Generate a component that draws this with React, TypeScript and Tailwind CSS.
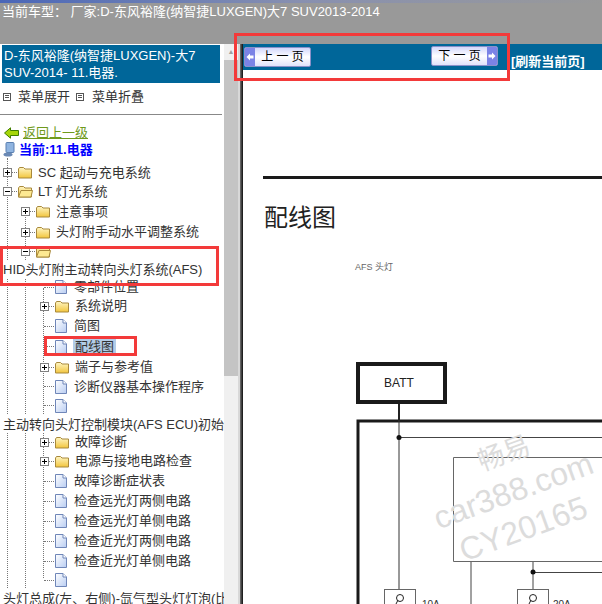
// App.tsx - repair manual viewer: tree on the left, wiring diagram page on the right
const FONT = { fontFamily: '"Liberation Sans", "Noto Sans CJK SC", sans-serif' };

type Row = { h: number; level?: 0 | 1 | 2; icon?: "closed" | "open" | "doc"; exp?: "+" | "-"; text?: string; sel?: boolean };

const rows: Row[] = [
  { h: 19, level: 0, icon: "closed", exp: "+", text: "SC 起动与充电系统" },
  { h: 19, level: 0, icon: "open", exp: "-", text: "LT 灯光系统" },
  { h: 21, level: 1, icon: "closed", exp: "+", text: "注意事项" },
  { h: 20, level: 1, icon: "closed", exp: "+", text: "头灯附手动水平调整系统" },
  { h: 18, level: 1, icon: "open", exp: "-" },
  { h: 18, text: "HID头灯附主动转向头灯系统(AFS)" },
  { h: 18, level: 2, icon: "doc", text: "零部件位置" },
  { h: 20, level: 2, icon: "closed", exp: "+", text: "系统说明" },
  { h: 20, level: 2, icon: "doc", text: "简图" },
  { h: 21, level: 2, icon: "doc", text: "配线图", sel: true },
  { h: 20, level: 2, icon: "closed", exp: "+", text: "端子与参考值" },
  { h: 19, level: 2, icon: "doc", text: "诊断仪器基本操作程序" },
  { h: 19, level: 2, icon: "doc" },
  { h: 18, text: "主动转向头灯控制模块(AFS ECU)初始化" },
  { h: 18, level: 2, icon: "closed", exp: "+", text: "故障诊断" },
  { h: 20, level: 2, icon: "closed", exp: "+", text: "电源与接地电路检查" },
  { h: 20, level: 2, icon: "doc", text: "故障诊断症状表" },
  { h: 20, level: 2, icon: "doc", text: "检查远光灯两侧电路" },
  { h: 20, level: 2, icon: "doc", text: "检查远光灯单侧电路" },
  { h: 20, level: 2, icon: "doc", text: "检查近光灯两侧电路" },
  { h: 20, level: 2, icon: "doc", text: "检查近光灯单侧电路" },
  { h: 18, level: 2, icon: "doc" },
  { h: 18, text: "头灯总成(左、右侧)-氙气型头灯灯泡(比" },
];

function Folder({ open }: { open?: boolean }) {
  return (
    <svg width="15" height="13" viewBox="0 0 15 13" className="shrink-0">
      <defs>
        <linearGradient id="fold" x1="0" y1="0" x2="0" y2="1">
          <stop offset="0" stopColor="#fff6c4" />
          <stop offset="1" stopColor="#f2c53d" />
        </linearGradient>
      </defs>
      <path d="M0.5 3 L1.5 1.5 H5.5 L7 3 H13.5 V12 H0.5 Z" fill="url(#fold)" stroke="#a8893c" />
      {open && <path d="M0.5 12 L3 5.5 H14.5 L13 12 Z" fill="#fde992" stroke="#a8893c" />}
    </svg>
  );
}

function Doc() {
  return (
    <svg width="12" height="14" viewBox="0 0 12 14" className="shrink-0">
      <defs>
        <linearGradient id="docg" x1="0" y1="0" x2="1" y2="1">
          <stop offset="0" stopColor="#ffffff" />
          <stop offset="1" stopColor="#b9cdf2" />
        </linearGradient>
      </defs>
      <path d="M0.5 0.5 H8 L11.5 4 V13.5 H0.5 Z" fill="url(#docg)" stroke="#6f86b8" />
      <path d="M8 0.5 V4 H11.5" fill="#fff" stroke="#6f86b8" />
    </svg>
  );
}

function Exp({ sign }: { sign: "+" | "-" }) {
  return (
    <span className="relative block h-[9px] w-[9px] shrink-0 border border-[#808080] bg-white">
      <span className="absolute left-[1px] top-[3px] h-px w-[5px] bg-black" />
      {sign === "+" && <span className="absolute left-[3px] top-[1px] h-[5px] w-px bg-black" />}
    </span>
  );
}

function TreeRow({ row }: { row: Row }) {
  if (row.level === undefined) {
    return (
      <div className="flex items-center overflow-hidden whitespace-nowrap bg-white pl-[3px] text-[13px] leading-none text-[#333]" style={{ height: row.h }}>
        {row.text}
      </div>
    );
  }
  const pl = row.level === 0 ? "pl-[3px]" : row.level === 1 ? "pl-[21px]" : "pl-[40px]";
  return (
    <div className={`flex items-center ${pl}`} style={{ height: row.h }}>
      <span className="flex w-[15px] shrink-0 items-center">
        {row.exp ? (
          <>
            <Exp sign={row.exp} />
            <span className="w-[5px] border-t border-dotted border-[#777]" />
          </>
        ) : (
          <span className="ml-[4px] w-[10px] border-t border-dotted border-[#777]" />
        )}
      </span>
      {row.icon === "doc" ? <Doc /> : <Folder open={row.icon === "open"} />}
      {row.text && (
        <span
          className={`whitespace-nowrap text-[13px] leading-[18px] text-[#333] ${
            row.sel ? "ml-[6px] bg-[#b3cde8] px-[2px]" : row.icon === "doc" ? "ml-[7px]" : "ml-[5px]"
          }`}
        >
          {row.text}
        </span>
      )}
    </div>
  );
}

function NavButton({ label, dir }: { label: string; dir: "l" | "r" }) {
  const arrow = (
    <span className="flex h-full w-[10px] items-center justify-center bg-[#7b83e6]">
      <svg width="8" height="8" viewBox="0 0 8 8">
        <path d={dir === "l" ? "M0.5 4 L4 0.5 V2.5 H7.5 V5.5 H4 V7.5 Z" : "M7.5 4 L4 0.5 V2.5 H0.5 V5.5 H4 V7.5 Z"} fill="#fff" />
      </svg>
    </span>
  );
  return (
    <span className="flex h-[20px] w-[67px] items-stretch overflow-hidden rounded-[2px] border border-[#8a90c8] bg-gradient-to-b from-[#d3d7fb] via-white to-[#e0e2fa]">
      {dir === "l" && arrow}
      <span className="flex-1 whitespace-nowrap text-center text-[12px] leading-[18px] text-black">{label}</span>
      {dir === "r" && arrow}
    </span>
  );
}

function Diagram() {
  return (
    <svg width="359" height="249" viewBox="243 355 359 249" className="block">
      <rect x="358" y="364" width="87" height="38" fill="#fff" stroke="#1a1a1a" strokeWidth="4" />
      <text x="399" y="387" textAnchor="middle" fontSize="12" fill="#222" fontFamily="Liberation Sans, sans-serif">BATT</text>
      <path d="M358 604 V421 H602" fill="none" stroke="#1a1a1a" strokeWidth="3" />
      <path d="M399 404 V420" stroke="#222" strokeWidth="2" />
      <path d="M399 420 V590" stroke="#333" strokeWidth="1" />
      <path d="M399 437.5 H602" stroke="#444" strokeWidth="1" />
      <circle cx="399" cy="437.5" r="2.5" fill="#111" />
      <path d="M602 457.5 H453.5 V561.5 H602" fill="none" stroke="#666" strokeWidth="1" />
      <path d="M471 562 V604 M533 562 V590" stroke="#444" strokeWidth="1" />
      <path d="M533 572.5 H602" stroke="#444" strokeWidth="1" />
      <circle cx="533" cy="572" r="2.5" fill="#111" />
      <rect x="384.5" y="589.5" width="31" height="20" fill="#fff" stroke="#666" />
      <rect x="517.5" y="589.5" width="31" height="20" fill="#fff" stroke="#666" />
      <circle cx="400" cy="598" r="3.5" fill="#fff" stroke="#222" />
      <circle cx="533" cy="598" r="3.5" fill="#fff" stroke="#222" />
      <path d="M396 604 L398 600 M529 604 L531 600" stroke="#222" />
      <text x="422" y="608" fontSize="10" fill="#333" fontFamily="Liberation Sans, sans-serif">10A</text>
      <text x="553" y="608" fontSize="10" fill="#333" fontFamily="Liberation Sans, sans-serif">20A</text>
      <g fill="#dcdcdc" fontFamily="Liberation Sans, Noto Sans CJK SC, sans-serif" textAnchor="middle">
        <text x="507" y="462" fontSize="27" transform="rotate(-20 507 462)">畅易</text>
        <text x="517" y="501" fontSize="32" transform="rotate(-20 517 501)">car388.com</text>
        <text x="527" y="539" fontSize="32" transform="rotate(-20 527 539)">CY20165</text>
      </g>
    </svg>
  );
}

export default function App() {
  return (
    <div className="relative h-[604px] w-[602px] overflow-hidden bg-white" style={FONT}>
      {/* top bar */}
      <div className="h-[44px] bg-[#999999]">
        <div className="h-[3px] bg-gradient-to-r from-[#4a66b8] via-[#8890b0] to-[#999999]" />
        <div className="whitespace-nowrap pl-[2px] text-[13px] leading-[17px] text-white">
          当前车型： 厂家:D-东风裕隆(纳智捷LUXGEN)大7 SUV2013-2014
        </div>
      </div>

      <div className="flex h-[560px]">
        {/* side tree */}
        <div className="w-[224px] shrink-0 overflow-hidden bg-white">
          <div className="ml-[2px] mt-[1px] h-[38px] w-[218px] bg-[#006699] px-[2px] pt-[2px] text-[13px] leading-[17px] text-white">
            D-东风裕隆(纳智捷LUXGEN)-大7<br />SUV-2014- 11.电器.
          </div>
          <div className="flex h-[31px] items-center pb-[4px] pl-[3px] text-[13px] text-[#333]">
            <span className="mr-[7px] flex h-[8px] w-[8px] flex-col justify-evenly border border-[#555] px-px">
              <span className="h-px bg-[#555]" />
              <span className="h-px bg-[#555]" />
            </span>
            菜单展开
            <span className="ml-[6px] mr-[8px] flex h-[8px] w-[8px] flex-col justify-evenly border border-[#555] px-px">
              <span className="h-px bg-[#555]" />
              <span className="h-px bg-[#555]" />
            </span>
            菜单折叠
          </div>
          <div className="h-px w-[222px] bg-[#888]" />
          <div className="mt-[9px] flex h-[17px] items-center pl-[4px] text-[13px]">
            <svg width="15" height="12" viewBox="0 0 15 12" className="mr-[4px]">
              <path d="M0.5 6 L6.5 0.8 V3.5 H14.5 V8.5 H6.5 V11.2 Z" fill="#a6d608" stroke="#3f7d00" />
            </svg>
            <span className="text-[#6f9a1c] underline">返回上一级</span>
          </div>
          <div className="flex h-[17px] items-center pl-[3px] text-[13px] font-bold text-[#0000ff]">
            <svg width="12" height="15" viewBox="0 0 12 15" className="mr-[4px]">
              <rect x="3" y="0.5" width="8" height="10" rx="1" fill="#8fb4e0" stroke="#5a7fb0" />
              <ellipse cx="5" cy="12.5" rx="4.5" ry="2" fill="#6a89b5" />
            </svg>
            当前:11.电器
          </div>
          <div className="relative pt-[5px]">
            {/* dotted tree guides */}
            <span className="absolute left-[7px] top-0 h-[440px] border-l border-dotted border-[#777]" />
            <span className="absolute left-[25px] top-[52px] h-[388px] border-l border-dotted border-[#777]" />
            <span className="absolute left-[43px] top-[130px] h-[290px] border-l border-dotted border-[#777]" />
            <div className="relative">
              {rows.map((r, i) => (
                <TreeRow key={i} row={r} />
              ))}
            </div>
          </div>
        </div>

        {/* scrollbar */}
        <div className="flex w-[14px] shrink-0 flex-col bg-[#f0f0f0]">
          <div className="flex h-[16px] items-center justify-center text-[7px] text-[#a0a0a0]">▲</div>
          <div className="h-[316px] bg-[#c4c4c4]" />
        </div>
        <div className="w-[2px] shrink-0 bg-[#d8d8d8]" />
        <div className="w-[3px] shrink-0 bg-gradient-to-r from-[#777] to-[#111]" />

        {/* page */}
        <div className="flex-1 overflow-hidden">
          <div className="flex h-[26px] items-start bg-[#006699] pl-[1px]">
            <span className="mt-[3px]"><NavButton label="上 一 页" dir="l" /></span>
            <span className="ml-[120px] mt-[2px]"><NavButton label="下 一 页" dir="r" /></span>
            <span className="ml-[13px] mt-[10px] whitespace-nowrap text-[13px] font-bold leading-[16px] text-white">[刷新当前页]</span>
          </div>
          <div className="ml-[20px] mt-[106px] h-[3px] bg-[#1a1a1a]" />
          <div className="ml-[21px] mt-[23px] text-[24px] leading-[32px] text-[#222]">配线图</div>
          <div className="ml-[112px] mt-[27px] h-[12px] text-[9px] leading-[12px] text-[#666]">AFS 头灯</div>
          <div className="mt-[82px]">
            <Diagram />
          </div>
        </div>
      </div>

      {/* red markup boxes drawn over the screenshot */}
      <div className="absolute left-[234px] top-[33px] h-[48px] w-[276px] border-[3px] border-[#f33a3a]" />
      <div className="absolute left-0 top-[246px] h-[40px] w-[219px] border-[3px] border-[#f33a3a]" />
      <div className="absolute left-[44px] top-[336px] h-[20px] w-[93px] border-[3px] border-[#f33a3a]" />
    </div>
  );
}
